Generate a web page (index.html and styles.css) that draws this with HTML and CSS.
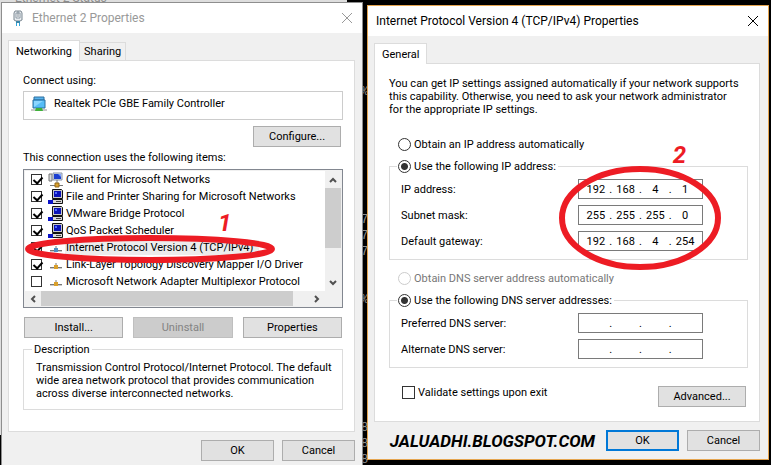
FILE: index.html
```
<!DOCTYPE html>
<html lang="en">
<head>
  <meta charset="UTF-8">
  <meta name="viewport" content="width=device-width, initial-scale=1.0">
  <title>Ethernet 2 Properties</title>
  <link rel="stylesheet" href="styles.css">
</head>
<body>
  <!-- Shared icons -->
  <svg class="sprite" aria-hidden="true">
    <symbol id="icon-client" viewBox="0 0 16 16">
      <path d="M1 2h3v7H1z" fill="#d8dce0" stroke="#777"/>
      <path d="M5 1h9v7H5z" fill="#dfe6f2" stroke="#8793a8"/>
      <path d="M6 2h7v5H6z" fill="#1c3fd0"/>
      <path d="M10 2h3v3z" fill="#7fa4ff"/>
      <path d="M9 8v4M2 13.5h13" stroke="#777" fill="none"/>
      <path d="M7 11h4v4H7z" fill="#d9a02c" stroke="#94691a"/>
    </symbol>
    <symbol id="icon-service" viewBox="0 0 16 16">
      <path d="M4.500 .5h9l1 1v8h-10z" fill="#c8c8c8" stroke="#111"/>
      <path d="M6 2h7v6H6z" fill="#0a12b8"/>
      <path d="M7 3h2v2H7z" fill="#4f6cff"/>
      <path d="M4.500 10.500h10v4h-10z" fill="#d8d8d8" stroke="#111"/>
      <path d="M0 11h5v4H0z" fill="#0a12c8"/>
      <path d="M8 12.500h5" stroke="#444"/>
    </symbol>
    <symbol id="icon-protocol" viewBox="0 0 16 16">
      <path d="M2 10.500h12" stroke="#777"/>
      <path d="M2 11.500h12" stroke="#ccc"/>
      <path d="M8 6v3" stroke="#777"/>
      <path d="M6 8h4v4H6z"/>
    </symbol>
    <symbol id="icon-close" viewBox="0 0 12 12">
      <path d="M1 1l10 10M11 1L1 11" fill="none" stroke="currentColor"/>
    </symbol>
    <symbol id="icon-arrow" viewBox="0 0 8 8">
      <path d="M1 6l3-3 3 3" fill="none" stroke="#505050" stroke-width="2"/>
    </symbol>
  </svg>

  <!-- Windows behind the dialogs -->
  <div class="status-window">
    <span class="status-title">Ethernet 2 Status</span>
  </div>
  <pre class="console">%







7
7
7


%







8
8
8</pre>

  <main class="desktop">
    <!-- Adapter properties -->
    <section class="dialog dialog-adapter">
      <header class="title-bar">
        <svg class="title-icon" viewBox="0 0 12 16">
          <path d="M3 1h6l1 2v7l-2 1H4l-2-1V3z" fill="#e8ecef" stroke="#7b8791"/>
          <path d="M4 3h4v5H4z" fill="#fff" stroke="#8a97a3"/>
          <path d="M6 1v6" stroke="#7b8791"/>
          <path d="M4 11h4v2H4z" fill="#3c86a8"/>
          <path d="M4.500 13v3M7.500 13v3" stroke="#2fa5dc"/>
        </svg>
        <h1>Ethernet 2 Properties</h1>
        <button class="close" aria-label="Close"><svg><use href="#icon-close"/></svg></button>
      </header>

      <div class="dialog-body">
        <nav class="tabs">
          <button class="tab active">Networking</button>
          <button class="tab">Sharing</button>
        </nav>
        <div class="panel">
          <p>Connect using:</p>
          <div class="adapter">
            <svg class="adapter-icon" viewBox="0 0 16 16">
              <path d="M3 1h10v3H3z" fill="#58b4ee" stroke="#2d6f9f"/>
              <path d="M2 4h12v8H2z" fill="#55bdf7" stroke="#2d6f9f"/>
              <path d="M3 11V5h9z" fill="#8bd6ff"/>
              <path d="M0 13h16v2H0z" fill="#c9c9c9"/>
              <path d="M5 12h6l1 3H4z" fill="#3fb13a"/>
            </svg>
            <span>Realtek PCIe GBE Family Controller</span>
          </div>
          <div class="configure-row"><button class="btn btn-wide">Configure...</button></div>

          <p>This connection uses the following items:</p>
          <div class="item-list">
            <ul class="items">
              <li><label><input type="checkbox" checked><svg><use href="#icon-client"/></svg><span>Client for Microsoft Networks</span></label></li>
              <li><label><input type="checkbox" checked><svg><use href="#icon-service"/></svg><span>File and Printer Sharing for Microsoft Networks</span></label></li>
              <li><label><input type="checkbox" checked><svg><use href="#icon-service"/></svg><span>VMware Bridge Protocol</span></label></li>
              <li><label><input type="checkbox" checked><svg><use href="#icon-service"/></svg><span>QoS Packet Scheduler</span></label></li>
              <li class="selected"><label><input type="checkbox" checked><svg><use href="#icon-protocol"/></svg><span>Internet Protocol Version 4 (TCP/IPv4)</span></label></li>
              <li><label><input type="checkbox" checked><svg><use href="#icon-protocol"/></svg><span>Link-Layer Topology Discovery Mapper I/O Driver</span></label></li>
              <li><label><input type="checkbox"><svg><use href="#icon-protocol"/></svg><span>Microsoft Network Adapter Multiplexor Protocol</span></label></li>
            </ul>
            <div class="scroll-y">
              <button aria-label="Scroll up"><svg><use href="#icon-arrow"/></svg></button>
              <div class="thumb"></div>
              <button class="down" aria-label="Scroll down"><svg><use href="#icon-arrow"/></svg></button>
            </div>
            <div class="scroll-x">
              <button class="left" aria-label="Scroll left"><svg><use href="#icon-arrow"/></svg></button>
              <div class="thumb"></div>
              <button class="right" aria-label="Scroll right"><svg><use href="#icon-arrow"/></svg></button>
            </div>
            <!-- Step 1 marker -->
            <svg class="mark mark-one" viewBox="0 0 252 30"><ellipse cx="126" cy="15" rx="122" ry="11"/></svg>
            <span class="step step-one">1</span>
          </div>

          <div class="action-row">
            <button class="btn">Install...</button>
            <button class="btn" disabled>Uninstall</button>
            <button class="btn">Properties</button>
          </div>

          <fieldset class="description">
            <legend>Description</legend>
            <p>Transmission Control Protocol/Internet Protocol. The default wide area network protocol that provides communication across diverse interconnected networks.</p>
          </fieldset>
        </div>
        <footer class="dialog-footer">
          <button class="btn btn-small">OK</button>
          <button class="btn btn-small">Cancel</button>
        </footer>
      </div>
    </section>

    <!-- TCP/IPv4 properties -->
    <section class="dialog dialog-ip">
      <header class="title-bar">
        <h2>Internet Protocol Version 4 (TCP/IPv4) Properties</h2>
        <button class="close" aria-label="Close"><svg><use href="#icon-close"/></svg></button>
      </header>

      <div class="dialog-body">
        <nav class="tabs">
          <button class="tab active">General</button>
        </nav>
        <div class="panel">
          <p class="intro">You can get IP settings assigned automatically if your network supports this capability. Otherwise, you need to ask your network administrator for the appropriate IP settings.</p>

          <label class="option"><input type="radio" name="ip">Obtain an IP address automatically</label>
          <fieldset class="group">
            <legend><label class="option"><input type="radio" name="ip" checked>Use the following IP address:</label></legend>
            <div class="field">
              <label for="ip-1">IP address:</label>
              <div class="octets"><input id="ip-1" value="192"><i>.</i><input aria-label="IP address 2" value="168"><i>.</i><input aria-label="IP address 3" value="4"><i>.</i><input aria-label="IP address 4" value="1"></div>
            </div>
            <div class="field">
              <label for="mask-1">Subnet mask:</label>
              <div class="octets"><input id="mask-1" value="255"><i>.</i><input aria-label="Subnet mask 2" value="255"><i>.</i><input aria-label="Subnet mask 3" value="255"><i>.</i><input aria-label="Subnet mask 4" value="0"></div>
            </div>
            <div class="field">
              <label for="gateway-1">Default gateway:</label>
              <div class="octets"><input id="gateway-1" value="192"><i>.</i><input aria-label="Default gateway 2" value="168"><i>.</i><input aria-label="Default gateway 3" value="4"><i>.</i><input aria-label="Default gateway 4" value="254"></div>
            </div>
            <!-- Step 2 marker -->
            <svg class="mark mark-two" viewBox="0 0 164 106"><ellipse cx="82" cy="53" rx="78" ry="49"/></svg>
            <span class="step step-two">2</span>
          </fieldset>

          <label class="option option-disabled"><input type="radio" name="dns" disabled>Obtain DNS server address automatically</label>
          <fieldset class="group">
            <legend><label class="option"><input type="radio" name="dns" checked>Use the following DNS server addresses:</label></legend>
            <div class="field">
              <label for="dns-1">Preferred DNS server:</label>
              <div class="octets"><input id="dns-1"><i>.</i><input aria-label="Preferred DNS 2"><i>.</i><input aria-label="Preferred DNS 3"><i>.</i><input aria-label="Preferred DNS 4"></div>
            </div>
            <div class="field">
              <label for="alt-1">Alternate DNS server:</label>
              <div class="octets"><input id="alt-1"><i>.</i><input aria-label="Alternate DNS 2"><i>.</i><input aria-label="Alternate DNS 3"><i>.</i><input aria-label="Alternate DNS 4"></div>
            </div>
          </fieldset>

          <div class="validate-row">
            <label><input type="checkbox">Validate settings upon exit</label>
            <button class="btn btn-wide">Advanced...</button>
          </div>
        </div>
        <footer class="dialog-footer">
          <span class="watermark">JALUADHI.BLOGSPOT.COM</span>
          <button class="btn btn-small btn-default">OK</button>
          <button class="btn btn-small">Cancel</button>
        </footer>
      </div>
    </section>
  </main>
</body>
</html>
```
FILE: styles.css
```
/* General Styles */
:root {
  --face: #f0f0f0;
  --line: #dcdcdc;
  --button: #e1e1e1;
  --button-line: #adadad;
  --mark: #ed1c24;
}

* {
  box-sizing: border-box;
}

body {
  margin: 0;
  height: 100vh;
  overflow: hidden;
  background: #000;
  color: #000;
  font-family: Roboto, "Liberation Sans", sans-serif;
  font-size: 11px;
  line-height: 13px;
}

h1,
h2,
p,
ul {
  margin: 0;
  padding: 0;
  font-size: inherit;
  font-weight: 400;
}

button,
input {
  margin: 0;
  padding: 0;
  border: 0;
  border-radius: 0;
  font: inherit;
  color: inherit;
}

fieldset {
  margin: 0;
  min-width: 0;
  border: 1px solid var(--line);
}

.sprite {
  position: absolute;
  width: 0;
  height: 0;
}

/* Background windows */
.status-window {
  position: absolute;
  top: 0;
  left: 0;
  width: 347px;
  height: 435px;
  overflow: hidden;
  background: #dedede;
}

.status-title {
  position: absolute;
  top: -8px;
  left: 15px;
  font-size: 12px;
  color: #8c8c8c;
}

.console {
  position: absolute;
  top: 84px;
  left: 361px;
  margin: 0;
  font: 12px/16px "Liberation Mono", monospace;
  color: #8f8f8f;
}

/* Dialogs */
.desktop {
  position: relative;
  display: flex;
  align-items: flex-start;
  gap: 5px;
  height: 100%;
  padding: 3px 2px 0;
}

.dialog {
  min-width: 0;
  background: var(--face);
}

.dialog-adapter {
  flex: 361;
  align-self: stretch;
  box-shadow: 0 0 0 1px #8e8e8e;
}

.dialog-ip {
  flex: 401;
  margin-top: 2px;
  border: 1px solid #e5a550;
}

.title-bar {
  display: flex;
  align-items: center;
  gap: 8px;
  height: 30px;
  padding: 0 9px 0 8px;
  background: #fff;
}

.title-bar h1,
.title-bar h2 {
  flex: 1;
  font-size: 12px;
  line-height: 16px;
}

.dialog-adapter .title-bar {
  padding-left: 10px;
  color: #999;
}

.title-icon {
  width: 12px;
  height: 16px;
}

.close {
  width: 12px;
  height: 12px;
  background: none;
}

.close svg {
  display: block;
  width: 12px;
  height: 12px;
}

.dialog-body {
  padding: 7px 7px 0 6px;
}

.tabs {
  display: flex;
  align-items: flex-end;
}

.tab {
  height: 18px;
  padding: 0 4px;
  border: 1px solid var(--line);
  border-width: 1px 1px 0 0;
  background: var(--face);
}

.tab.active {
  position: relative;
  height: 21px;
  margin-bottom: -1px;
  padding: 0 7px;
  border-left-width: 1px;
  background: #fff;
}

.panel {
  padding: 13px 11px 21px 14px;
  border: 1px solid var(--line);
  background: #fff;
}

/* Buttons */
.btn {
  height: 21px;
  border: 1px solid var(--button-line);
  background: var(--button);
}

.btn:disabled {
  border-color: #bfbfbf;
  background: #ccc;
  color: #838383;
}

.btn-wide {
  width: 88px;
}

.btn-small {
  width: 73px;
}

.btn-default {
  border: 2px solid #0078d7;
}

.dialog-footer {
  display: flex;
  align-items: center;
  justify-content: flex-end;
  gap: 8px;
  padding-top: 8px;
}

/* Check boxes and radios */
input[type="checkbox"] {
  appearance: none;
  flex: none;
  width: 11px;
  height: 11px;
  border: 1px solid #333;
  background: #fff;
}

input[type="checkbox"]:checked::after {
  content: "";
  display: block;
  width: 4px;
  height: 7px;
  margin: 0 3px;
  border: solid #000;
  border-width: 0 2px 2px 0;
  transform: rotate(42deg);
}

input[type="radio"] {
  appearance: none;
  flex: none;
  width: 13px;
  height: 13px;
  border: 1px solid #333;
  border-radius: 50%;
  background: #fff;
}

input[type="radio"]:checked {
  background: radial-gradient(circle, #333 3px, #fff 4px);
}

input[type="radio"]:disabled {
  border-color: #ccc;
}

/* Adapter dialog */
.adapter {
  display: flex;
  align-items: center;
  gap: 7px;
  height: 29px;
  margin-top: 4px;
  padding: 0 7px 4px;
  border: 1px solid #ccc;
}

.adapter-icon {
  width: 16px;
  height: 16px;
}

.configure-row {
  display: flex;
  justify-content: flex-end;
  margin: 6px 2px 4px 0;
}

.item-list {
  position: relative;
  display: grid;
  grid-template-columns: 1fr 16px;
  margin-top: 5px;
  padding: 1px;
  border: 1px solid #828790;
  background: var(--face);
}

.items {
  height: 120px;
  background: #fff;
  list-style: none;
}

.items label {
  display: flex;
  align-items: center;
  height: 17px;
  padding-left: 6px;
  white-space: nowrap;
}

.items svg {
  width: 16px;
  height: 16px;
  margin: 0 1px 0 6px;
  fill: #d9a02c;
}

.items span {
  padding: 1px;
}

.selected span {
  padding-right: 6px;
  background: #ececec;
}

.items .selected svg {
  fill: #4d8fc4;
}

.scroll-y,
.scroll-x {
  display: flex;
}

.scroll-y {
  flex-direction: column;
}

.scroll-x {
  height: 15px;
}

.item-list button {
  display: flex;
  align-items: center;
  justify-content: center;
  width: 16px;
  height: 17px;
  background: none;
}

.item-list .scroll-x button {
  height: 15px;
}

.item-list button svg {
  width: 8px;
  height: 8px;
}

.thumb {
  background: #cdcdcd;
}

.scroll-y .thumb {
  height: 60px;
  margin-bottom: auto;
}

.scroll-x .thumb {
  flex: 1;
  margin-right: 16px;
}

.down svg {
  transform: rotate(180deg);
}

.left svg {
  transform: rotate(-90deg);
}

.right svg {
  transform: rotate(90deg);
}

.action-row {
  display: grid;
  grid-template-columns: repeat(3, 1fr);
  gap: 10px;
  margin: 9px 1px 5px;
}

.description {
  padding: 5px 6px 9px 12px;
}

.description legend {
  margin-left: -4px;
  padding: 0 2px;
}

/* IP dialog */
.dialog-ip .panel {
  padding: 13px 11px 14px 14px;
}

.dialog-ip .dialog-body {
  padding: 7px 8px 8px 6px;
}

.intro {
  margin-bottom: 21px;
  padding-right: 5px;
}

.option {
  display: flex;
  align-items: center;
  gap: 3px;
  height: 14px;
  margin-left: 9px;
}

.option-disabled {
  margin-top: 11px;
  color: #777;
}

.group {
  position: relative;
  display: flex;
  flex-direction: column;
  gap: 6px;
  margin-top: 8px;
  padding: 6px 44px 8px 11px;
}

.group legend {
  margin-left: -4px;
  padding: 0 2px 0 0;
}

.group .option {
  margin-left: 1px;
}

.field {
  display: flex;
  align-items: center;
  justify-content: space-between;
}

.octets {
  display: flex;
  align-items: center;
  width: 125px;
  height: 20px;
  padding: 0 4px;
  border: 1px solid #7a7a7a;
  background: #fff;
}

.octets input {
  flex: 1;
  min-width: 0;
  background: none;
  text-align: center;
  outline: none;
}

.octets i {
  width: 4px;
  font-style: normal;
  text-align: center;
}

.validate-row {
  display: flex;
  align-items: flex-start;
  justify-content: space-between;
  margin: 18px 2px 0 13px;
}

.validate-row label {
  display: flex;
  align-items: center;
  gap: 3px;
}

.validate-row input[type="checkbox"] {
  width: 13px;
  height: 13px;
}

.watermark {
  flex: 1;
  padding-right: 3px;
  text-align: right;
  font: italic 700 17px/20px Roboto, sans-serif;
}

/* Red markers */
.mark {
  position: absolute;
  fill: none;
  stroke: var(--mark);
  stroke-width: 6px;
  pointer-events: none;
}

.mark-one {
  top: 64px;
  left: 0;
  width: 252px;
  height: 30px;
}

.mark-two {
  top: -8px;
  right: 25px;
  width: 164px;
  height: 106px;
}

.step {
  position: absolute;
  font: italic 700 24px/24px Roboto, sans-serif;
  color: var(--mark);
}

.step-one {
  top: 41px;
  left: 194px;
}

.step-two {
  top: -30px;
  right: 61px;
}
```
